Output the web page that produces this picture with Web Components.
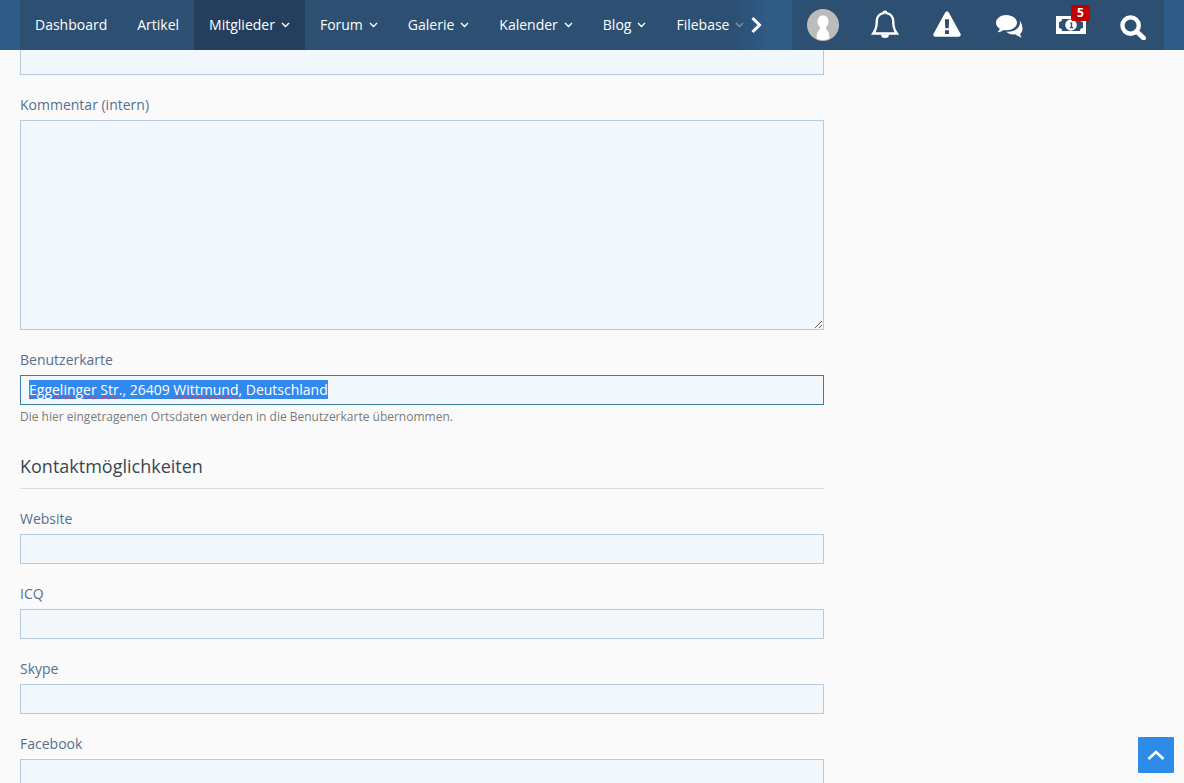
<!doctype html>
<html>
<head>
<meta charset="utf-8">
<title>Profil bearbeiten</title>
<style>
  html, body { margin: 0; height: 100%; overflow: hidden; }
  body { background: #fafafa; font: 14px/20px "Open Sans", sans-serif; }
  main { display: block; width: 804px; padding-left: 20px; margin-top: -5px; }
</style>
</head>
<body>

<template id="top-bar-template">
<style>
  :host { display: block; height: 50px; padding: 0 20px; background: #2f5c87; box-sizing: border-box; position: relative; z-index: 2; }
  .inner { display: flex; height: 50px; background: #2c4f72; }
  nav { position: relative; display: flex; width: 772px; flex: none; overflow: hidden; }
  .more { position: absolute; top: 0; right: 0; width: 60px; height: 50px; background: linear-gradient(to right, rgba(47,92,135,0), #2f5c87 65%); display: flex; align-items: center; justify-content: flex-end; }
  .more svg { display: block; margin-right: 30px; }
  .icons { display: flex; flex: 1; align-items: center; }
</style>
<div class="inner">
  <nav>
    <slot name="nav"></slot>
    <div class="more"><svg width="12" height="18" viewBox="0 0 12 18"><path d="M2.5 2 9.5 9 2.5 16" fill="none" stroke="#fff" stroke-width="3"/></svg></div>
  </nav>
  <div class="icons"><slot name="icons"></slot></div>
</div>
</template>

<template id="nav-item-template">
<style>
  :host { display: flex; flex: none; align-items: center; height: 50px; padding: 0 15px; color: #fff; white-space: nowrap; }
  :host([active]) { background: #243f5d; }
  svg { display: none; margin-left: 6px; }
  :host([chevron]) svg { display: block; }
  :host([dim]) svg { opacity: .45; }
</style>
<slot></slot>
<svg width="9" height="6" viewBox="0 0 9 6"><path d="M1 1 4.5 4.5 8 1" fill="none" stroke="#fff" stroke-width="1.4"/></svg>
</template>

<template id="bar-icon-template">
<style>
  :host { display: block; position: relative; flex: none; line-height: 0; }
  .badge { display: none; position: absolute; top: -11px; left: 15px; width: 19px; height: 16px; border-radius: 2px; background: #c00000; color: #fff; font: 700 12px/16px "Open Sans", sans-serif; text-align: center; }
  :host([badge]) .badge { display: block; }
</style>
<slot></slot>
<span class="badge"></span>
</template>

<template id="form-field-template">
<style>
  :host { display: block; margin-top: 20px; }
  label { display: block; color: #56708c; margin-bottom: 5px; line-height: 20px; }
  .hint { display: none; margin-top: 3px; font-size: 12px; line-height: 18px; color: #7a7a7a; }
  :host([hint]) .hint { display: block; }
</style>
<label></label>
<slot></slot>
<div class="hint"></div>
</template>

<template id="text-box-template">
<style>
  :host { display: block; }
  input, textarea, .focus { display: block; box-sizing: border-box; width: 100%; margin: 0; border: 1px solid #b6cbdf; border-radius: 0; outline: 0; background: #f2f7fc; color: #2c4f72; font: inherit; padding: 4px 8px; }
  input { height: 30px; }
  textarea { height: 210px; resize: both; }
  .focus { height: 30px; border-color: #3b7f9c; white-space: nowrap; line-height: 18px; }
  .sel { display: inline-block; padding-top: 1px; background: #3189ee; color: #fff; }
  .sel u { text-decoration: underline wavy #d8344e 1px; text-underline-offset: 0; }
</style>
<div id="box"></div>
</template>

<template id="form-section-template">
<style>
  :host { display: block; margin-top: 28px; }
  h2 { margin: 0; padding-bottom: 9px; border-bottom: 1px solid #dedede; font: 400 18px/25px "Open Sans", sans-serif; color: #3b4650; }
</style>
<h2><slot name="title"></slot></h2>
<slot></slot>
</template>

<template id="scroll-top-template">
<style>
  :host { display: flex; position: fixed; right: 10px; bottom: 10px; width: 36px; height: 36px; background: #2d8ce8; align-items: center; justify-content: center; border-radius: 1px; }
</style>
<svg width="20" height="12" viewBox="0 0 20 12"><path d="M2.5 10 10 3 17.5 10" fill="none" stroke="#fff" stroke-width="2.6"/></svg>
</template>

<script>
function useTemplate(el, id) {
  let sr = el.attachShadow({mode: 'open'});
  sr.appendChild(document.getElementById(id).content.cloneNode(true));
  return sr;
}

customElements.define('top-bar', class extends HTMLElement {
  constructor() { super(); useTemplate(this, 'top-bar-template'); }
});

customElements.define('nav-item', class extends HTMLElement {
  constructor() { super(); useTemplate(this, 'nav-item-template'); }
});

customElements.define('bar-icon', class extends HTMLElement {
  constructor() { super(); this.sr = useTemplate(this, 'bar-icon-template'); }
  connectedCallback() { this.sr.querySelector('.badge').textContent = this.getAttribute('badge') || ''; }
});

customElements.define('form-field', class extends HTMLElement {
  constructor() { super(); this.sr = useTemplate(this, 'form-field-template'); }
  connectedCallback() {
    this.sr.querySelector('label').textContent = this.getAttribute('label');
    this.sr.querySelector('.hint').textContent = this.getAttribute('hint') || '';
  }
});

customElements.define('text-box', class extends HTMLElement {
  constructor() { super(); this.sr = useTemplate(this, 'text-box-template'); }
  connectedCallback() {
    let box = this.sr.querySelector('#box');
    let kind = this.getAttribute('kind');
    if (kind == 'area') {
      box.appendChild(document.createElement('textarea'));
    } else if (kind == 'selected') {
      // selected text in a focused input, drawn as text so the spellcheck marks can show
      let focus = document.createElement('div');
      focus.className = 'focus';
      let sel = document.createElement('span');
      sel.className = 'sel';
      sel.innerHTML = this.getAttribute('value');
      focus.appendChild(sel);
      box.appendChild(focus);
    } else {
      box.appendChild(document.createElement('input'));
    }
  }
});

customElements.define('form-section', class extends HTMLElement {
  constructor() { super(); useTemplate(this, 'form-section-template'); }
});

customElements.define('scroll-top', class extends HTMLElement {
  constructor() { super(); useTemplate(this, 'scroll-top-template'); }
});
</script>

<top-bar>
  <nav-item slot="nav">Dashboard</nav-item>
  <nav-item slot="nav">Artikel</nav-item>
  <nav-item slot="nav" chevron active>Mitglieder</nav-item>
  <nav-item slot="nav" chevron>Forum</nav-item>
  <nav-item slot="nav" chevron>Galerie</nav-item>
  <nav-item slot="nav" chevron>Kalender</nav-item>
  <nav-item slot="nav" chevron>Blog</nav-item>
  <nav-item slot="nav" chevron dim>Filebase</nav-item>

  <bar-icon slot="icons" style="margin-left:15px">
    <svg width="32" height="32" viewBox="0 0 32 32"><circle cx="16" cy="16" r="16" fill="#bcbcbc"/><path d="M16 6.5c3.4 0 5.5 2.7 5.5 6 0 2.6-1.3 4.6-2.5 5.8-.4 1.5.4 2.3 1.5 3.5 1.4 1.600 1.900 4 1.900 7.900a16 16 0 0 1-12.800 0c0-3.900.5-6.300 1.900-7.900 1.100-1.200 1.900-2 1.500-3.500-1.200-1.200-2.500-3.200-2.500-5.800 0-3.300 2.100-6 5.500-6z" fill="#fff"/></svg>
  </bar-icon>
  <bar-icon slot="icons" style="margin:0 0 2px 32px">
    <svg width="28" height="30" viewBox="0 0 28 30"><path d="M14 2.800c-.9 0-1.400.5-1.500 1.300-3.900.7-6.700 3.800-6.700 8.100 0 6.800-1.200 9.100-3.600 12.300h23.600c-2.400-3.200-3.600-5.500-3.600-12.300 0-4.300-2.800-7.400-6.700-8.100-.1-.8-.6-1.300-1.500-1.300z" fill="none" stroke="#fff" stroke-width="2.400"/><path d="M10 25.500a4 3.500 0 0 0 8 0z" fill="#fff"/></svg>
  </bar-icon>
  <bar-icon slot="icons" style="margin:0 0 2px 34px">
    <svg width="28" height="26" viewBox="0.5 0 29 27"><path fill-rule="evenodd" d="M15 .5c.9 0 1.500.5 2 1.300L29 23.500c.9 1.700-.2 3.200-1.800 3.200H2.800C1.200 26.700.1 25.200 1 23.500L13 1.800C13.500 1 14.100.5 15 .5zM12.800 8.500l.4 9.500h3.600l.4-9.500zM12.900 20v3.900h4.200V20z" fill="#fff"/></svg>
  </bar-icon>
  <bar-icon slot="icons" style="margin:2px 0 0 35px">
    <svg width="28" height="23" viewBox="0 0 28 23"><path d="M10.500 0C4.700 0 0 3.500 0 7.800c0 2.500 1.500 4.600 3.800 6-.3 1.200-1 2.300-2.400 3.500 2.600-.2 4.800-1.100 6.300-2.300.9.200 1.800.3 2.800.3 5.800 0 10.500-3.400 10.500-7.500S16.300 0 10.500 0z" fill="#fff"/><path d="M23.400 5.200c.4.800.6 1.700.6 2.600 0 5-5.500 8.900-12.500 9h-1.300c1.600 1.600 4.200 2.700 7.100 2.700.7 0 1.400-.1 2.100-.2 1.400 1.300 3.600 2.400 6.400 3.500-.9-1.200-1.500-2.500-1.700-3.900 1.400-1.300 2.400-3.100 2.400-5 0-3.500-1.200-6.800-3.100-8.700z" fill="#fff"/></svg>
  </bar-icon>
  <bar-icon slot="icons" badge="5" style="margin:0 0 0 32px">
    <svg width="30" height="18" viewBox="0 0 30 18"><path fill-rule="evenodd" d="M0 0h30v18H0zM3 6v6c2 0 3 1 3 3h18c0-2 1-3 3-3V6c-2 0-3-1-3-3H6c0 2-1 3-3 3z" fill="#fff"/><path fill-rule="evenodd" d="M15 3.200a5.800 5.800 0 1 1 0 11.600 5.800 5.800 0 0 1 0-11.600zM14 6.500v1h.8v3.600h-1v1.200h3.400v-1.200h-1V6.500z" fill="#fff"/></svg>
  </bar-icon>
  <bar-icon slot="icons" style="margin:4px 0 0 33px">
    <svg width="28" height="25" viewBox="0 0 28 26"><circle cx="11.500" cy="11" r="8.500" fill="none" stroke="#fff" stroke-width="4.500"/><path d="M17.500 17 25 24" fill="none" stroke="#fff" stroke-width="5" stroke-linecap="round"/></svg>
  </bar-icon>
</top-bar>

<main>
  <text-box></text-box>
  <form-field label="Kommentar (intern)"><text-box kind="area"></text-box></form-field>
  <form-field label="Benutzerkarte" hint="Die hier eingetragenen Ortsdaten werden in die Benutzerkarte übernommen.">
    <text-box kind="selected" value="<u>Eggelinger</u> <u>Str</u>., 26409 <u>Wittmund</u>, Deutschland"></text-box>
  </form-field>
  <form-section>
    <span slot="title">Kontaktmöglichkeiten</span>
    <form-field label="Website"><text-box></text-box></form-field>
    <form-field label="ICQ"><text-box></text-box></form-field>
    <form-field label="Skype"><text-box></text-box></form-field>
    <form-field label="Facebook"><text-box></text-box></form-field>
  </form-section>
</main>

<scroll-top></scroll-top>

</body>
</html>
